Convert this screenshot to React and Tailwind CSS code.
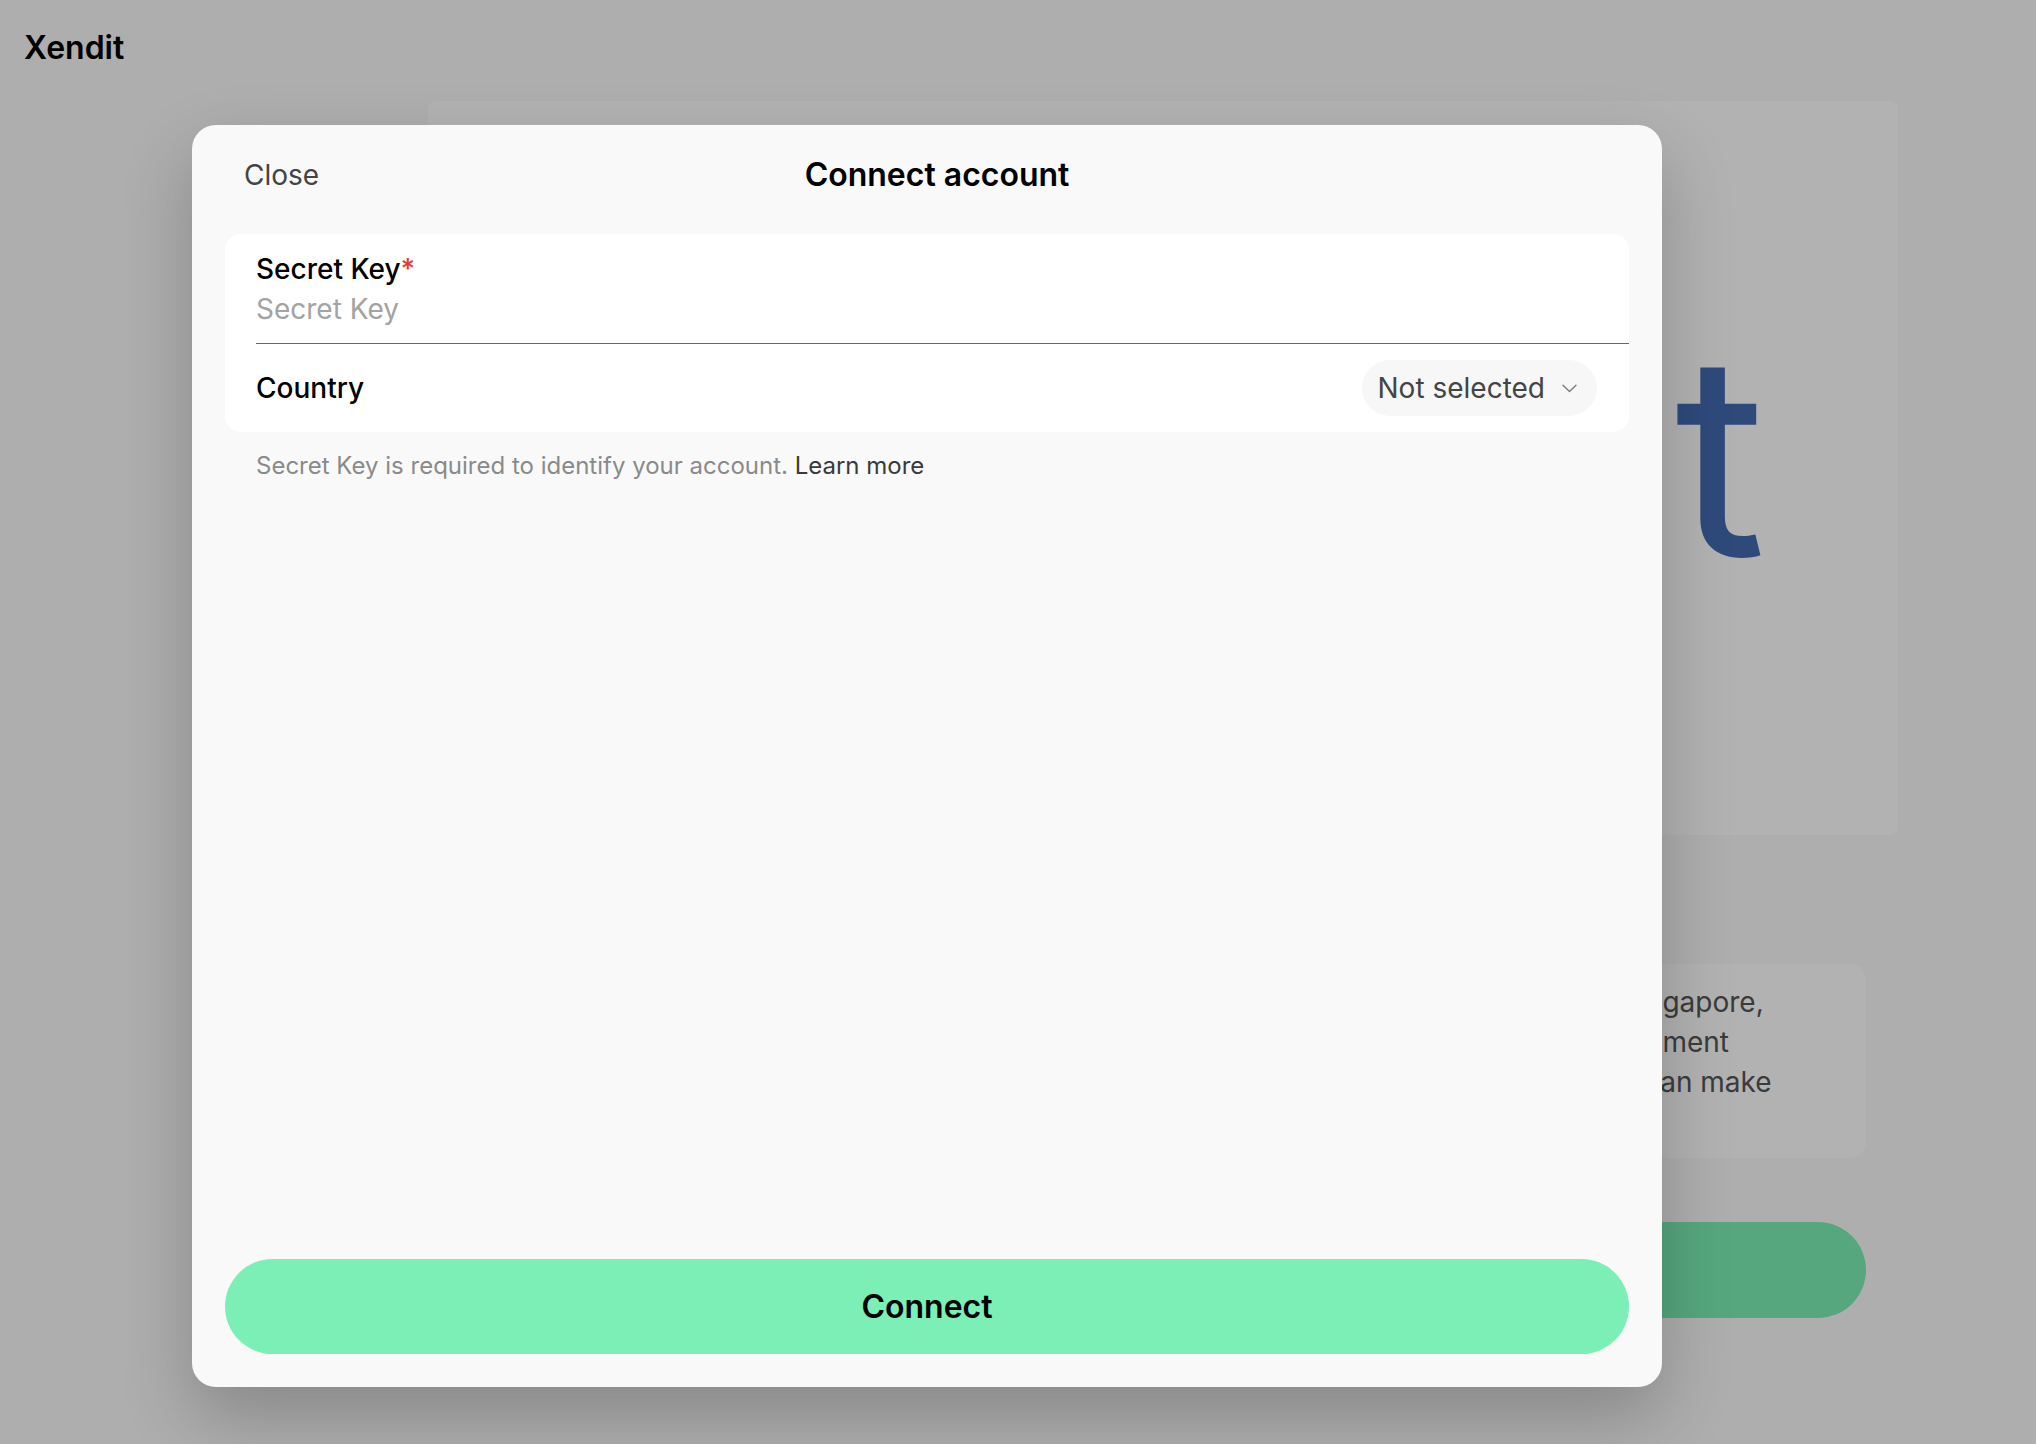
import React from "react";

const Chevron = () => (
  <svg width="15" height="9" viewBox="0 0 15 9" fill="none">
    <path d="M1 1.2l6.5 6.3L14 1.2" stroke="#7a7a7a" strokeWidth="1.4" strokeLinecap="round" strokeLinejoin="round" />
  </svg>
);

const BackPage = () => (
  <div className="flex flex-col w-full h-full bg-[#fafafa]">
    {/* Top bar */}
    <div className="h-[101px] pl-[24px] pt-[28px]">
      <div className="text-[32px] leading-[40px] font-semibold text-black">Xendit</div>
    </div>

    {/* Content column */}
    <div className="ml-[428px] w-[1470px] flex flex-col">
      <div className="h-[734px] bg-white rounded-lg flex justify-end pr-[132px] pt-[214px]">
        <span className="text-[279px] leading-none font-normal text-[#436bb1]">Xendit</span>
      </div>

      <div className="mx-8 mt-[129px] bg-white rounded-2xl pl-[32px] pt-[18px] pb-[16px] text-[28px] leading-[40px] text-[#555]">
        <div className="whitespace-nowrap">Xendit is the payment gateway for businesses in Indonesia, the Philippines, Thailand, Singapore,</div>
        <div className="whitespace-nowrap">Vietnam and Malaysia. Accept payments from customers through one simple secure payment</div>
        <div className="whitespace-nowrap">platform with many local payment methods, so that businesses of all sizes everywhere can make</div>
        <div className="whitespace-nowrap">payments and grow faster.</div>
      </div>

      <div className="mx-8 mt-[64px] h-[96px] rounded-full bg-[#7befb5]"></div>
    </div>
  </div>
);

const ConnectModal = () => (
  <div className="w-[1470px] h-[1262px] flex flex-col rounded-[24px] bg-[#f9f9f9] px-[33px] shadow-[0_30px_70px_rgba(0,0,0,0.22)]">
    {/* Header */}
    <div className="h-[100px] mb-[9px] grid grid-cols-[1fr_auto_1fr] items-center px-[19px]">
      <button className="justify-self-start text-[28px] text-[#444]">Close</button>
      <h2 className="ml-[20px] text-[32px] font-semibold text-black">Connect account</h2>
      <div></div>
    </div>

    {/* Form card */}
    <div className="bg-white rounded-[16px] pl-[31px]">
      <div className="pt-[18px] pb-[17px] border-b border-[#dc3545]">
        <label className="block text-[28px] leading-[34px] font-medium text-black">
          Secret Key<span className="text-[#e53935]">*</span>
        </label>
        <input
          type="text"
          placeholder="Secret Key"
          className="mt-[6px] w-full h-[34px] text-[28px] bg-transparent outline-none placeholder:text-[#a3a3a3]"
        />
      </div>
      <div className="h-[88px] flex items-center justify-between pr-[32px]">
        <span className="text-[28px] font-medium text-black">Country</span>
        <button className="h-[56px] flex items-center gap-[17px] pl-[16px] pr-[20px] rounded-full bg-[#f7f7f7]">
          <span className="text-[28px] text-[#444]">Not selected</span>
          <Chevron />
        </button>
      </div>
    </div>

    <p className="mt-[18px] pl-[31px] text-[24px] leading-[32px] text-[#8a8a8a]">
      Secret Key is required to identify your account. <span className="text-[#3a3a3a]">Learn more</span>
    </p>

    <div className="flex-1"></div>

    <button className="mb-[33px] h-[95px] w-full rounded-full bg-[#7befb5] text-[32px] font-semibold text-black">
      Connect
    </button>
  </div>
);

export default function App() {
  return (
    <div className="relative w-[2036px] h-[1444px] overflow-hidden font-['Inter',sans-serif]">
      <BackPage />
      {/* Dimmed overlay + dialog */}
      <div className="absolute inset-0 bg-black/30 pl-[192px] pt-[125px]">
        <ConnectModal />
      </div>
    </div>
  );
}
